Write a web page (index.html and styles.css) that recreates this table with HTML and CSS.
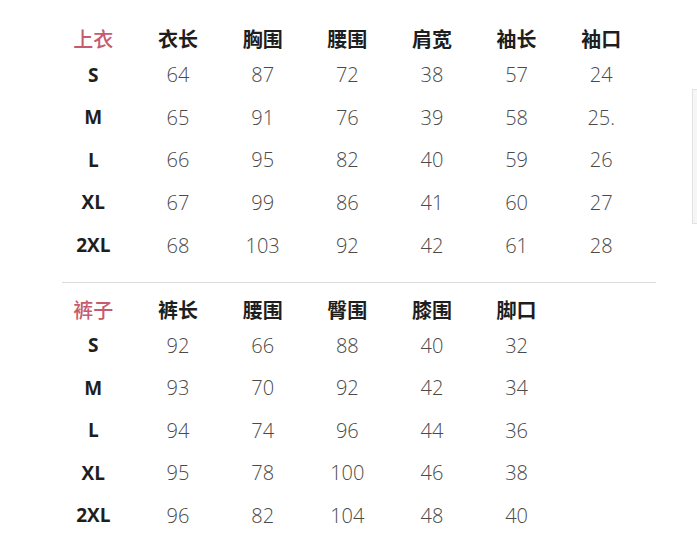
FILE: index.html
```html
<!DOCTYPE html>
<html lang="zh">
<head>
<meta charset="utf-8">
<link rel="stylesheet" href="styles.css">
</head>
<body>
<div class="page">
  <div class="size-table top">
    <div class="cell title">上衣</div><div class="cell head">衣长</div><div class="cell head">胸围</div><div class="cell head">腰围</div><div class="cell head">肩宽</div><div class="cell head">袖长</div><div class="cell head">袖口</div>
    <div class="cell size">S</div><div class="cell num">64</div><div class="cell num">87</div><div class="cell num">72</div><div class="cell num">38</div><div class="cell num">57</div><div class="cell num">24</div>
    <div class="cell size">M</div><div class="cell num">65</div><div class="cell num">91</div><div class="cell num">76</div><div class="cell num">39</div><div class="cell num">58</div><div class="cell num">25.</div>
    <div class="cell size">L</div><div class="cell num">66</div><div class="cell num">95</div><div class="cell num">82</div><div class="cell num">40</div><div class="cell num">59</div><div class="cell num">26</div>
    <div class="cell size">XL</div><div class="cell num">67</div><div class="cell num">99</div><div class="cell num">86</div><div class="cell num">41</div><div class="cell num">60</div><div class="cell num">27</div>
    <div class="cell size">2XL</div><div class="cell num">68</div><div class="cell num">103</div><div class="cell num">92</div><div class="cell num">42</div><div class="cell num">61</div><div class="cell num">28</div>
  </div>
  <div class="divider"></div>
  <div class="size-table bottom">
    <div class="cell title">裤子</div><div class="cell head">裤长</div><div class="cell head">腰围</div><div class="cell head">臀围</div><div class="cell head">膝围</div><div class="cell head">脚口</div><div class="cell"></div>
    <div class="cell size">S</div><div class="cell num">92</div><div class="cell num">66</div><div class="cell num">88</div><div class="cell num">40</div><div class="cell num">32</div><div class="cell"></div>
    <div class="cell size">M</div><div class="cell num">93</div><div class="cell num">70</div><div class="cell num">92</div><div class="cell num">42</div><div class="cell num">34</div><div class="cell"></div>
    <div class="cell size">L</div><div class="cell num">94</div><div class="cell num">74</div><div class="cell num">96</div><div class="cell num">44</div><div class="cell num">36</div><div class="cell"></div>
    <div class="cell size">XL</div><div class="cell num">95</div><div class="cell num">78</div><div class="cell num">100</div><div class="cell num">46</div><div class="cell num">38</div><div class="cell"></div>
    <div class="cell size">2XL</div><div class="cell num">96</div><div class="cell num">82</div><div class="cell num">104</div><div class="cell num">48</div><div class="cell num">40</div><div class="cell"></div>
  </div>
  <div class="scroll-thumb"></div>
</div>
</body>
</html>
```
FILE: styles.css
```css
html, body {
  margin: 0;
  padding: 0;
  background: #ffffff;
}
body {
  width: 697px;
  height: 541px;
  overflow: hidden;
}
.page {
  position: relative;
  width: 697px;
  height: 541px;
  padding-top: 24px;
  box-sizing: border-box;
}
.size-table {
  display: grid;
  grid-template-columns: repeat(7, 84.67px);
  grid-template-rows: 29.4px repeat(5, 42.6px);
  margin-left: 51px;
}
.cell {
  display: flex;
  align-items: center;
  justify-content: center;
  white-space: nowrap;
}
.title {
  font-family: "Noto Sans CJK SC", sans-serif;
  font-size: 20px;
  font-weight: 500;
  color: #c75a6c;
}
.head {
  font-family: "Noto Sans CJK SC", sans-serif;
  font-size: 20px;
  font-weight: 700;
  color: #1e1e1e;
}
.size {
  font-family: "Open Sans", sans-serif;
  font-size: 19px;
  font-weight: 700;
  color: #1e1e1e;
}
.num {
  font-family: "Open Sans", sans-serif;
  font-size: 20px;
  font-weight: 300;
  color: #4a4a4a;
}
.divider {
  height: 1px;
  background: #dcdcdc;
  margin: 16px 41px 11px 62px;
}
.scroll-thumb {
  position: absolute;
  left: 692px;
  top: 89px;
  width: 8px;
  height: 135px;
  box-sizing: border-box;
  background: #f6f6f6;
  border: 1px solid #e2e2e2;
}
```
